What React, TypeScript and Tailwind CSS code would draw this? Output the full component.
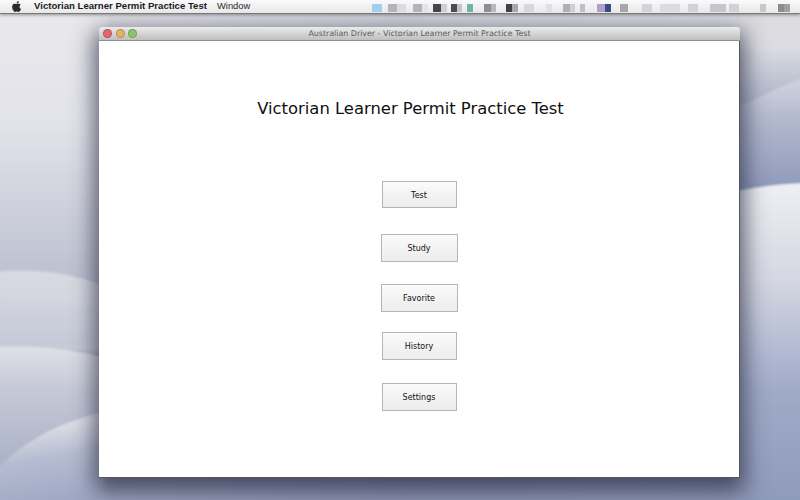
import React from 'react';

const font = "font-['Liberation_Sans',sans-serif]";
const verdana = "font-['DejaVu_Sans',sans-serif]";

// pixelated blobs where the menu bar extras were blurred out
const extras = [
  { x: 372, w: 10, c: '#a3cdec' }, { x: 388, w: 9, c: '#b4b4b8' }, { x: 397, w: 9, c: '#dcdce0' },
  { x: 413, w: 9, c: '#b4b4b8' }, { x: 422, w: 6, c: '#e4e4e8' }, { x: 433, w: 8, c: '#44474a' },
  { x: 441, w: 6, c: '#cfcfd2' }, { x: 451, w: 6, c: '#4a4c50' }, { x: 457, w: 5, c: '#c4c4c8' },
  { x: 467, w: 6, c: '#74b0ac' }, { x: 484, w: 7, c: '#8e8e92' }, { x: 491, w: 5, c: '#b8b8bc' },
  { x: 506, w: 6, c: '#3f4144' }, { x: 512, w: 6, c: '#a8a8ac' }, { x: 524, w: 10, c: '#d8d8da' },
  { x: 546, w: 6, c: '#e0e0e2' }, { x: 563, w: 7, c: '#b0b0b4' }, { x: 570, w: 5, c: '#d0d0d4' },
  { x: 580, w: 5, c: '#c0c0c4' }, { x: 597, w: 8, c: '#b0a0c8' }, { x: 605, w: 6, c: '#3c4a88' },
  { x: 620, w: 8, c: '#a8a8aa' }, { x: 642, w: 10, c: '#d4d4d6' }, { x: 660, w: 20, c: '#dcdcde' },
  { x: 688, w: 10, c: '#d2d2d4' }, { x: 710, w: 16, c: '#c6c6c8' }, { x: 729, w: 10, c: '#d2d2d4' },
  { x: 760, w: 6, c: '#c8c8ca' }, { x: 778, w: 6, c: '#8c8c8e' }, { x: 784, w: 6, c: '#a0a0a2' },
];

function Wallpaper() {
  return (
    <svg className="absolute inset-0 w-full h-full" viewBox="0 0 800 500" preserveAspectRatio="none">
      <defs>
        <linearGradient id="strip" gradientUnits="userSpaceOnUse" x1="0" y1="0" x2="800" y2="0">
          <stop offset="0" stopColor="#a2a9c4" />
          <stop offset="0.5" stopColor="#8f96b4" />
          <stop offset="1" stopColor="#8f9bbb" />
        </linearGradient>
        <linearGradient id="stripTop" gradientUnits="userSpaceOnUse" x1="0" y1="0" x2="800" y2="0">
          <stop offset="0" stopColor="#e8e8ec" />
          <stop offset="0.5" stopColor="#d6d7dd" />
          <stop offset="1" stopColor="#dfe0e5" />
        </linearGradient>
        <linearGradient id="leftTop" gradientUnits="userSpaceOnUse" x1="0" y1="20" x2="0" y2="280">
          <stop offset="0" stopColor="#e8e8ec" />
          <stop offset="0.4" stopColor="#e2e3e9" />
          <stop offset="1" stopColor="#bcc0d0" />
        </linearGradient>
        <linearGradient id="leftBand1" gradientUnits="userSpaceOnUse" x1="0" y1="272" x2="0" y2="345">
          <stop offset="0" stopColor="#d8dae2" />
          <stop offset="0.4" stopColor="#d4d6df" />
          <stop offset="1" stopColor="#b8bccd" />
        </linearGradient>
        <linearGradient id="leftBand2" gradientUnits="userSpaceOnUse" x1="0" y1="346" x2="0" y2="470">
          <stop offset="0" stopColor="#dfe1e6" />
          <stop offset="0.35" stopColor="#c6c9d6" />
          <stop offset="1" stopColor="#a9afc7" />
        </linearGradient>
        <linearGradient id="leftDune" gradientUnits="userSpaceOnUse" x1="62" y1="424" x2="74" y2="500">
          <stop offset="0" stopColor="#dcdee5" />
          <stop offset="0.4" stopColor="#b6bcd1" />
          <stop offset="1" stopColor="#9fa8c4" />
        </linearGradient>
        <linearGradient id="rightTop" gradientUnits="userSpaceOnUse" x1="0" y1="15" x2="0" y2="105">
          <stop offset="0" stopColor="#dcdce0" />
          <stop offset="0.35" stopColor="#dcdde2" />
          <stop offset="1" stopColor="#aab1c8" />
        </linearGradient>
        <linearGradient id="rightBand" gradientUnits="userSpaceOnUse" x1="0" y1="85" x2="0" y2="190">
          <stop offset="0" stopColor="#cdd0dc" />
          <stop offset="0.3" stopColor="#b4bacf" />
          <stop offset="1" stopColor="#8e99bb" />
        </linearGradient>
        <linearGradient id="rightDune" gradientUnits="userSpaceOnUse" x1="0" y1="185" x2="0" y2="500">
          <stop offset="0" stopColor="#eeeff3" />
          <stop offset="0.3" stopColor="#d4d7e1" />
          <stop offset="0.65" stopColor="#a0abc9" />
          <stop offset="1" stopColor="#8f9bbb" />
        </linearGradient>
        <filter id="soft"><feGaussianBlur stdDeviation="1" /></filter>
      </defs>
      <rect x="0" y="0" width="800" height="250" fill="url(#stripTop)" />
      <rect x="0" y="250" width="800" height="250" fill="url(#strip)" />
      <g filter="url(#soft)">
        <rect x="-4" y="14" width="112" height="340" fill="url(#leftTop)" />
        <path d="M-4 272 C30 268 70 272 104 286 L104 346 L-4 346 Z" fill="url(#leftBand1)" />
        <path d="M-4 296 C30 302 70 308 104 310 L104 350 L-4 350 Z" fill="#cfd2dd" opacity="0.6" />
        <path d="M-4 347 C40 345 70 350 104 357 L104 504 L-4 504 Z" fill="url(#leftBand2)" />
        <path d="M-4 470 C25 440 60 422 104 412 L104 504 L-4 504 Z" fill="url(#leftDune)" />
        <rect x="735" y="10" width="70" height="110" fill="url(#rightTop)" />
        <path d="M735 108 C755 100 780 86 805 77 L805 190 L735 196 Z" fill="url(#rightBand)" />
        <path d="M735 191 C760 187 780 184 805 183 L805 505 L735 505 Z" fill="url(#rightDune)" />
      </g>
    </svg>
  );
}

function AppleLogo() {
  return (
    <svg viewBox="0 0 24 24" className="w-[13px] h-[13px] fill-[#2a2a2a]">
      <path d="M17.6 12.6c0-2.6 2.1-3.8 2.2-3.9-1.2-1.7-3-2-3.7-2-1.6-.2-3 .9-3.8.9-.8 0-2-.9-3.3-.9-1.7 0-3.3 1-4.2 2.5-1.8 3.1-.5 7.7 1.3 10.2.9 1.2 1.9 2.6 3.2 2.6 1.3-.1 1.8-.8 3.3-.8s2 .8 3.3.8c1.4 0 2.2-1.2 3.1-2.5 1-1.4 1.4-2.8 1.4-2.9-.1 0-2.8-1.1-2.8-4ZM15.1 5c.7-.9 1.2-2 1-3.2-1 0-2.2.7-2.9 1.5-.6.7-1.2 1.9-1 3 1.1.1 2.2-.5 2.9-1.3Z" />
    </svg>
  );
}

function MenuBar() {
  return (
    <div className={`relative z-20 h-[14px] bg-gradient-to-b from-[#fafafa] to-[#e8e8e8] border-b border-[#77777c] shadow-[0_1px_3px_rgba(40,40,50,0.45)] flex items-center ${font}`}>
      <div className="ml-[10px] mr-[11px]"><AppleLogo /></div>
      <span className="text-[9.6px] font-bold text-[#1c1c1c]">Victorian Learner Permit Practice Test</span>
      <span className="ml-[10px] text-[9.4px] text-[#2a2a2a]">Window</span>
      {extras.map((e, i) => (
        <div key={i} className="absolute top-[4px] h-[8px]" style={{ left: e.x, width: e.w, background: e.c }} />
      ))}
    </div>
  );
}

function Light({ color }: { color: string }) {
  return <div className={`w-[9px] h-[9px] rounded-full border border-black/20 ${color}`} />;
}

function MenuButton({ label, w, h, mt }: { label: string; w: string; h: string; mt: string }) {
  return (
    <button className={`${w} ${h} ${mt} pt-[2px] flex items-center justify-center text-[8px] text-[#111] border border-[#b5b5b5] bg-gradient-to-b from-[#fbfbfb] to-[#ececec] ${verdana}`}>
      {label}
    </button>
  );
}

export default function App() {
  return (
    <div className="relative w-[800px] h-[500px] overflow-hidden">
      <Wallpaper />
      <MenuBar />
      {/* the app window sits on the desktop */}
      <div className="absolute left-[99px] top-[27px] w-[641px] h-[451px] bg-white flex flex-col rounded-t-[4px] shadow-[0_8px_22px_5px_rgba(35,38,60,0.7)]">
        <div className="h-[14px] flex items-center rounded-t-[4px] bg-gradient-to-b from-[#ebebeb] to-[#bfbfbf] border-b border-[#8e8e8e] relative">
          <div className="flex gap-[3.5px] ml-[4px]">
            <Light color="bg-[#e0686c]" />
            <Light color="bg-[#e8b060]" />
            <Light color="bg-[#8cc46c]" />
          </div>
          <span className={`absolute left-0 right-0 text-center text-[7.9px] text-[#5a5a5a] ${verdana}`}>Australian Driver - Victorian Learner Permit Practice Test</span>
        </div>
        <div className="flex-1 flex flex-col items-center border-r border-b border-[#55555c]">
          <h1 className={`mt-[57px] ml-[-17px] text-[16.4px] leading-[22px] text-[#111] ${verdana}`}>Victorian Learner Permit Practice Test</h1>
          <div className="flex flex-col items-center">
            <MenuButton label="Test" w="w-[75px]" h="h-[27px]" mt="mt-[61px]" />
            <MenuButton label="Study" w="w-[77px]" h="h-[28px]" mt="mt-[26px]" />
            <MenuButton label="Favorite" w="w-[77px]" h="h-[28px]" mt="mt-[22px]" />
            <MenuButton label="History" w="w-[75px]" h="h-[28px]" mt="mt-[20px]" />
            <MenuButton label="Settings" w="w-[75px]" h="h-[28px]" mt="mt-[23px]" />
          </div>
        </div>
      </div>
    </div>
  );
}
